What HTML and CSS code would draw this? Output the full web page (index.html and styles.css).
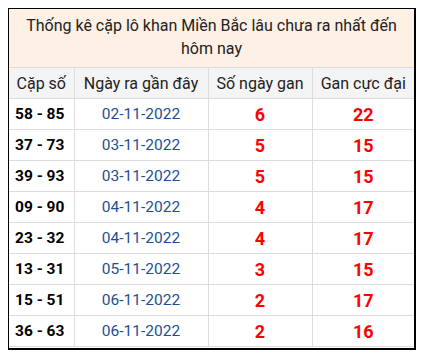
FILE: index.html
```html
<!DOCTYPE html>
<html lang="vi">
<head>
<meta charset="utf-8">
<link rel="stylesheet" href="styles.css">
</head>
<body>
<div class="box">
  <div class="title">Thống kê cặp lô khan Miền Bắc lâu chưa ra nhất đến hôm nay</div>
  <table class="tbl">
    <colgroup>
      <col class="c1"><col class="c2"><col class="c3"><col class="c4">
    </colgroup>
    <thead>
      <tr><th>Cặp số</th><th>Ngày ra gần đây</th><th>Số ngày gan</th><th>Gan cực đại</th></tr>
    </thead>
    <tbody>
      <tr><td class="pair">58 - 85</td><td class="date">02-11-2022</td><td class="num">6</td><td class="num">22</td></tr>
      <tr><td class="pair">37 - 73</td><td class="date">03-11-2022</td><td class="num">5</td><td class="num">15</td></tr>
      <tr><td class="pair">39 - 93</td><td class="date">03-11-2022</td><td class="num">5</td><td class="num">15</td></tr>
      <tr><td class="pair">09 - 90</td><td class="date">04-11-2022</td><td class="num">4</td><td class="num">17</td></tr>
      <tr><td class="pair">23 - 32</td><td class="date">04-11-2022</td><td class="num">4</td><td class="num">17</td></tr>
      <tr><td class="pair">13 - 31</td><td class="date">05-11-2022</td><td class="num">3</td><td class="num">15</td></tr>
      <tr><td class="pair">15 - 51</td><td class="date">06-11-2022</td><td class="num">2</td><td class="num">17</td></tr>
      <tr><td class="pair">36 - 63</td><td class="date">06-11-2022</td><td class="num">2</td><td class="num">16</td></tr>
    </tbody>
  </table>
</div>
</body>
</html>
```

FILE: styles.css
```css
html, body {
  margin: 0;
  padding: 0;
  background: #fff;
}
body {
  padding: 8px 0 0 8px;
  font-family: Roboto, "Noto Sans", sans-serif;
  color: #222;
}
.box {
  width: 405px;
  border-style: solid;
  border-color: #000;
  border-width: 1px 2px 2px 1px;
  padding-bottom: 1px;
}
.title {
  background: #fdf0e5;
  text-align: center;
  font-size: 16px;
  line-height: 23px;
  padding: 5px 8px 5px;
  border-bottom: 1px solid #ddd;
  height: 48px;
}
.tbl {
  width: 100%;
  border-collapse: collapse;
  table-layout: fixed;
}
.c1 { width: 65px; }
.c2 { width: 134px; }
.c3 { width: 104px; }
.c4 { width: auto; }
.tbl th, .tbl td {
  border: 1px solid #ddd;
  height: 30px;
  padding: 0;
  text-align: center;
}
.tbl tr > :first-child { border-left: none; }
.tbl tr > :last-child { border-right: none; }
.tbl thead tr th { border-top: none; }
.tbl th {
  background: #f4f4f4;
  font-weight: normal;
  font-size: 16px;
  color: #222;
}
.tbl td.pair {
  text-align: left;
  padding-left: 6px;
  font-weight: bold;
  font-size: 15.5px;
  color: #000;
}
.tbl td.date {
  font-size: 15.5px;
  color: #1d4f94;
}
.tbl td.num {
  font-weight: bold;
  font-size: 18px;
  color: #ff0000;
}
```
